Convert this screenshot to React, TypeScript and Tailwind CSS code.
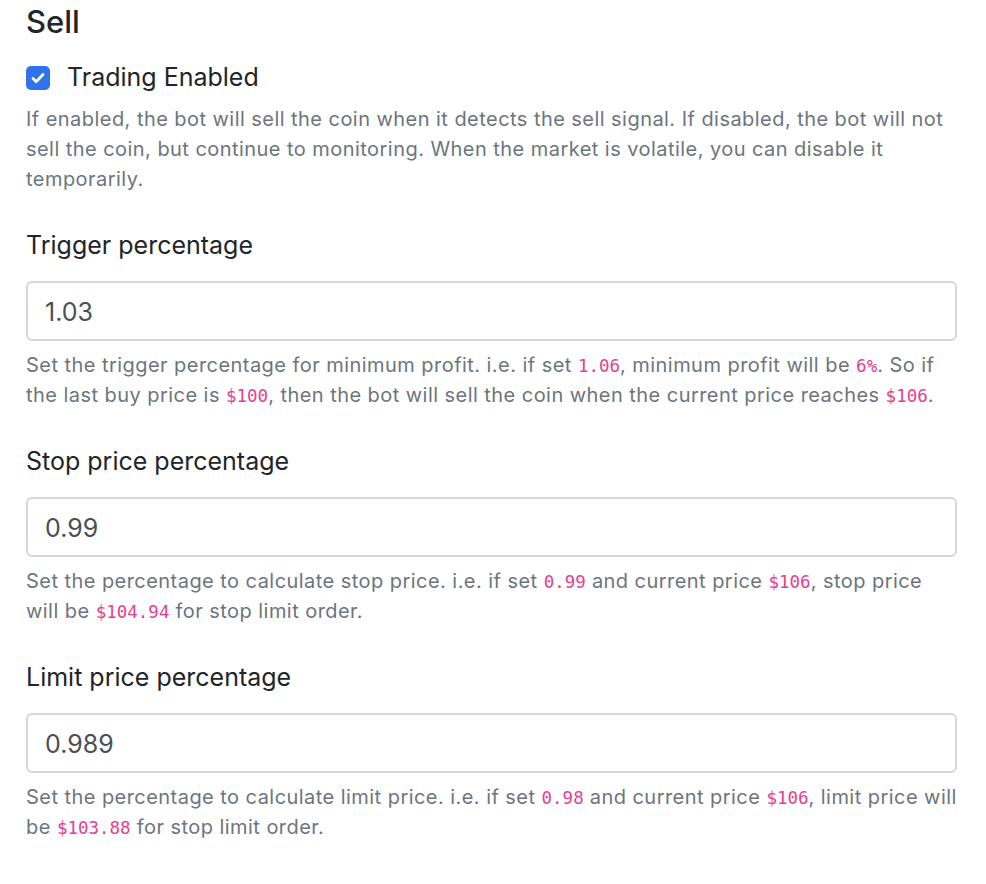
import React from "react";

const C = ({ children }: { children: React.ReactNode }) => (
  <code className="text-[#e83e8c] text-[17.5px] leading-none tracking-normal [font-family:'DejaVu_Sans_Mono',monospace]">{children}</code>
);

const Group = ({
  label,
  value,
  children,
}: {
  label: string;
  value: string;
  children: React.ReactNode;
}) => (
  <div className="flex flex-col">
    <label className="text-[25px] leading-[36px] text-[#212529] mb-[18px]">{label}</label>
    <div className="h-[60px] w-full rounded-[6px] border-[2px] border-[#d4d6d9] bg-white flex items-center pl-[17px] pt-[3px] text-[25px] text-[#495057]">
      {value}
    </div>
    <p className="mt-[9px] text-[20px] leading-[30px] tracking-[0.45px] text-[#6c757d]">{children}</p>
  </div>
);

export default function App() {
  return (
    <div className="min-h-screen bg-white [font-family:Inter,'Noto_Sans',sans-serif] pl-[26px] pr-[29px]">
      <h5 className="text-[31px] leading-[44px] text-[#212529] font-medium">Sell</h5>
      <div className="mt-[12px] flex items-center gap-[17px] h-[44px]">
        <span className="w-[24px] h-[24px] rounded-[5px] bg-[#2f72ea] flex items-center justify-center">
          <svg width="16" height="16" viewBox="0 0 16 16" fill="none">
            <path d="M3 8.5l3.2 3.2L13 4.5" stroke="white" strokeWidth="2.8" strokeLinecap="round" strokeLinejoin="round" />
          </svg>
        </span>
        <span className="text-[25px] text-[#212529]">Trading Enabled</span>
      </div>
      <p className="mt-[4px] text-[20px] leading-[30px] tracking-[0.45px] text-[#6c757d]">
        If enabled, the bot will sell the coin when it detects the sell signal. If disabled, the bot will not sell the coin, but
        continue to monitoring. When the market is volatile, you can disable it temporarily.
      </p>
      <div className="mt-[33px] flex flex-col gap-[33px]">
        <Group label="Trigger percentage" value="1.03">
          Set the trigger percentage for minimum profit. i.e. if set <C>1.06</C>, minimum profit will be <C>6%</C>. So if the last
          buy price is <C>$100</C>, then the bot will sell the coin when the current price reaches <C>$106</C>.
        </Group>
        <Group label="Stop price percentage" value="0.99">
          Set the percentage to calculate stop price. i.e. if set <C>0.99</C> and current price <C>$106</C>, stop price will be{" "}
          <C>$104.94</C> for stop limit order.
        </Group>
        <Group label="Limit price percentage" value="0.989">
          Set the percentage to calculate limit price. i.e. if set <C>0.98</C> and current price <C>$106</C>, limit price will be{" "}
          <C>$103.88</C> for stop limit order.
        </Group>
      </div>
    </div>
  );
}
